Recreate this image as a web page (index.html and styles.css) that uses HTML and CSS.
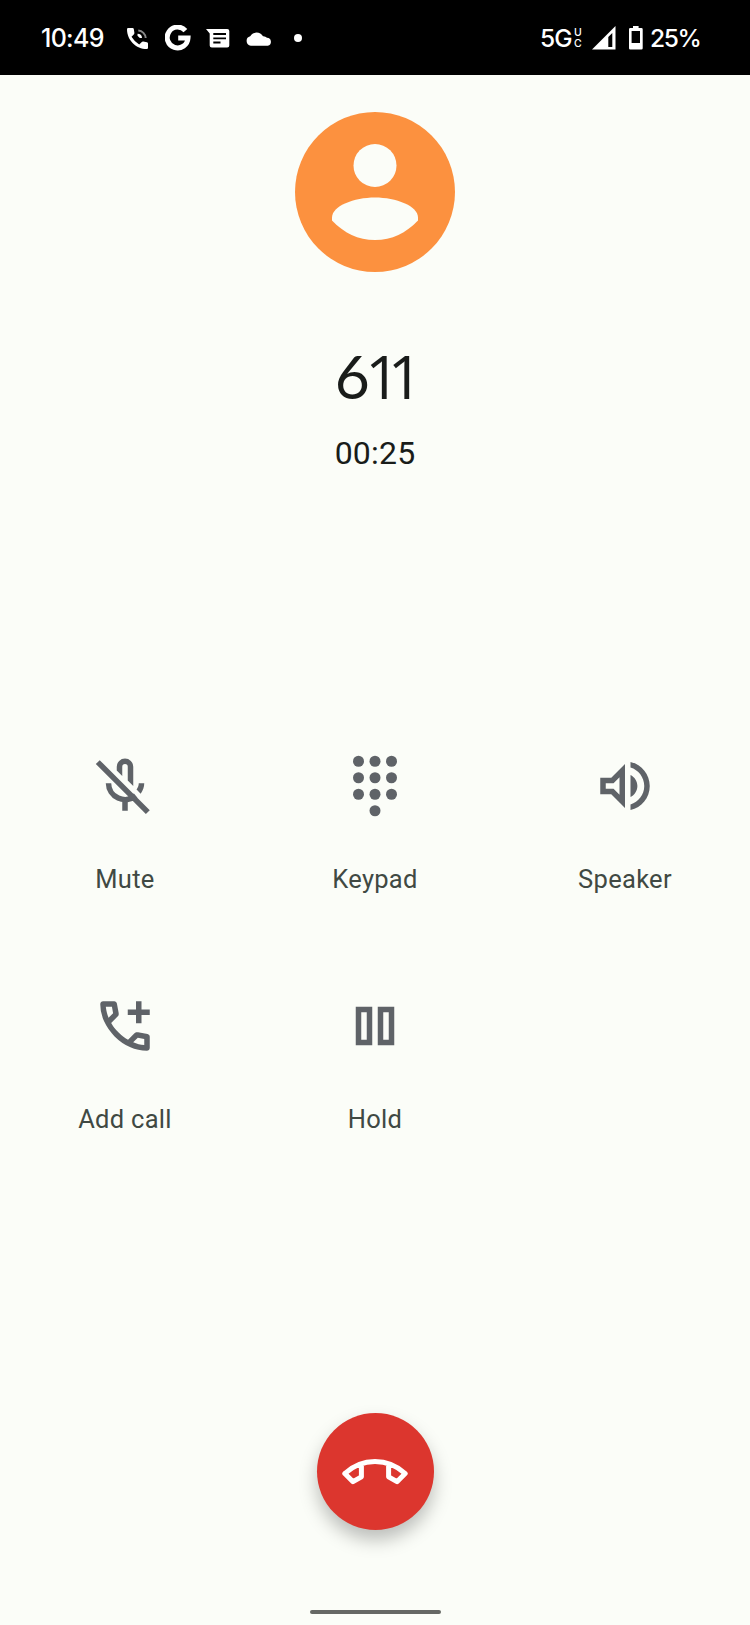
FILE: index.html
```
<!DOCTYPE html>
<html lang="en">

<head>
  <meta charset="UTF-8">
  <title>Call</title>
  <link rel="stylesheet" href="styles.css">
</head>

<body>
  <div class="status">
    <span class="time">10:49</span>
    <svg class="s-phone" width="21" height="21" viewBox="0 0 21 21">
      <path fill="#fff" d="M1.2 0H5.6Q6.6 0 6.8 1L7.4 4.8Q7.5 5.6 7 6.2L4.5 8.8Q7.4 13.7 12.2 16.4L14.8 13.9Q15.4 13.3 16.2 13.5L20 14.2Q21 14.4 21 15.4V19.8Q21 21 19.8 21C9 21 0 12 0 1.2Q0 0 1.2 0Z" />
      <path fill="none" stroke="#888" stroke-width="2" d="M11.3 2.5A8 8 0 0 1 18.7 10" />
      <path fill="#fff" d="M10.5 5.8A4.5 4.5 0 0 1 15 10H12.8L10.5 7.8Z" />
    </svg>
    <svg class="s-google" width="26" height="26" viewBox="0 0 26 26">
      <path fill="none" stroke="#fff" stroke-width="5" d="M20.4 5.6A10.4 10.4 0 1 0 23 13.1H13.2" />
    </svg>
    <svg class="s-msg" width="24" height="19" viewBox="0 0 24 19">
      <path fill="#fff" d="M0 0H21.2Q23.3 0 23.3 2V16.5Q23.3 18.6 21.2 18.6H5.8Q3.7 18.6 3.7 16.5V4.6Z" />
      <path stroke="#000" stroke-width="1.8" d="M7.3 5H20M7.3 9.3H20M7.3 13.5H14.5" />
    </svg>
    <svg class="s-cloud" width="26" height="15" viewBox="0 0 26 15">
      <path fill="#fff" d="M4.8 14.7A4.8 4.8 0 0 1 4.2 5.3A7.4 7.4 0 0 1 17 5.3A5 5 0 0 1 21 6.8A4 4 0 0 1 21.8 14.7Z" />
    </svg>
    <span class="dot"></span>
    <span class="net">5G</span>
    <span class="uc"><i>U</i><i>C</i></span>
    <svg class="s-signal" width="24" height="24" viewBox="0 0 24 24">
      <path fill="#fff" fill-rule="evenodd" d="M0 23.5L23.5 0V23.5ZM16.3 11V21H20.3V7Z" />
    </svg>
    <svg class="s-battery" width="14" height="24" viewBox="0 0 14 24">
      <path fill="#fff" fill-rule="evenodd" d="M4 0H9.6V2H12.4Q13.7 2 13.7 3.3V22.2Q13.7 23.5 12.4 23.5H1.3Q0 23.5 0 22.2V3.3Q0 2 1.3 2H4ZM2.6 5V17H11V5Z" />
    </svg>
    <span class="percent">25%</span>
  </div>

  <div class="call">
    <svg class="avatar" width="160" height="160" viewBox="0 0 160 160">
      <circle cx="80" cy="80" r="80" fill="#fc913f" />
      <circle cx="80" cy="53.5" r="21.5" fill="#fbfdf8" />
      <path fill="#fbfdf8" d="M37 105.500C37 94 59 85.500 80 85.500S123 94 123 105.500V108.500C111 121 97 128 80 128S49 121 37 108.500Z" />
    </svg>
    <h1 class="number"><span class="six">6</span>11</h1>
    <div class="timer">00:25</div>

    <div class="actions">
      <div class="item">
        <svg class="icon" viewBox="0 0 24 24">
          <path d="M9 6.400V5A3 3 0 0 1 15 5V12L13 10V5A1 1 0 0 0 11 5V8.400ZM17 11H19C19 12.400 18.500 13.700 17.700 14.800L16.200 13.300C16.700 12.600 17 11.800 17 11ZM11 17.500H13V21H11Z" />
          <path class="line" d="M6 11A6 6 0 0 0 15.900 15.500M2.100 3.300L20.300 21.500" />
        </svg>
        <span class="label">Mute</span>
      </div>
      <div class="item">
        <svg class="icon" viewBox="0 0 24 24">
          <circle cx="6" cy="3" r="2" /><circle cx="12" cy="3" r="2" /><circle cx="18" cy="3" r="2" />
          <circle cx="6" cy="9" r="2" /><circle cx="12" cy="9" r="2" /><circle cx="18" cy="9" r="2" />
          <circle cx="6" cy="15" r="2" /><circle cx="12" cy="15" r="2" /><circle cx="18" cy="15" r="2" />
          <circle cx="12" cy="21" r="2" />
        </svg>
        <span class="label">Keypad</span>
      </div>
      <div class="item">
        <svg class="icon" viewBox="0 0 24 24">
          <path d="M3 9v6h4l5 5V4L7 9H3zm7-.17v6.34L7.830 13H5v-2h2.830L10 8.830zM16.500 12c0-1.770-1.020-3.290-2.500-4.030v8.050c1.480-.73 2.500-2.250 2.500-4.020zM14 3.230v2.060c2.890.86 5 3.540 5 6.710s-2.110 5.850-5 6.710v2.060c4.010-.91 7-4.490 7-8.770 0-4.280-2.990-7.860-7-8.770z" />
        </svg>
        <span class="label">Speaker</span>
      </div>
      <div class="item">
        <svg class="icon" viewBox="0 0 24 24">
          <path d="M19.950 21q-3.125 0-6.175-1.362-3.050-1.363-5.550-3.863-2.500-2.500-3.862-5.550Q3 7.175 3 4.050q0-.45.3-.75t.75-.3H8.100q.35 0 .625.238.275.237.325.562l.65 3.500q.05.4-.025.675-.075.275-.275.475L6.975 10.900q.5.925 1.187 1.787.688.863 1.513 1.663.775.775 1.625 1.438.85.662 1.800 1.212l2.350-2.350q.225-.225.588-.338.362-.112.712-.062l3.450.7q.35.1.575.363.225.262.225.587v4.050q0 .45-.3.75t-.75.3ZM6.025 9l1.650-1.650L7.250 5H5.025q.125 1.025.35 2.025.225 1 .65 1.975Zm8.950 8.950q.975.425 1.988.675 1.012.25 2.037.325v-2.200l-2.350-.475Z" />
          <path class="line" d="M17 3V11M13 7H21" />
        </svg>
        <span class="label">Add call</span>
      </div>
      <div class="item">
        <svg class="icon" viewBox="0 0 24 24">
          <path class="line" d="M6 6H10V18H6ZM14 6H18V18H14Z" />
        </svg>
        <span class="label">Hold</span>
      </div>
    </div>

    <div class="hangup">
      <svg width="66" height="26" viewBox="0 0 66 26">
        <path fill="none" stroke="#fff" stroke-width="5" stroke-linejoin="round" stroke-linecap="round" d="M2.800 14.500Q16 2.500 33 2.500T63.200 14.500L55 22.700L46.600 17.800V6M2.800 14.500L11 22.700L19.400 17.800V6" />
      </svg>
    </div>
    <div class="home"></div>
  </div>
</body>

</html>
```
FILE: styles.css
```
* {
  margin: 0;
  padding: 0;
  box-sizing: border-box;
}

body {
  width: 750px;
  height: 1625px;
  overflow: hidden;
  background-color: #fbfdf8;
  font-family: Roboto, "Liberation Sans", sans-serif;
  color: #191c1a;
}

svg {
  display: block;
  flex: none;
}

.status {
  display: flex;
  align-items: center;
  height: 75px;
  padding-top: 1px;
  padding-left: 41px;
  background-color: #000;
  color: #fff;
  font-family: Inter, sans-serif;
  font-size: 25px;
  font-weight: 500;
  line-height: 30px;
  white-space: nowrap;
}

.time {
  width: 86px;
  letter-spacing: -.7px;
}

.s-google {
  margin-left: 17px;
}

.s-msg {
  margin-left: 15px;
}

.s-cloud {
  margin-left: 16px;
}

.dot {
  width: 8px;
  height: 8px;
  margin-left: 22px;
  border-radius: 50%;
  background-color: #fff;
}

.net {
  width: 34px;
  margin-left: 238px;
  font-size: 24.5px;
  letter-spacing: -.8px;
}

.uc {
  display: flex;
  flex-direction: column;
  width: 9px;
  font-size: 10.5px;
  line-height: 11px;
}

.uc i {
  font-style: normal;
}

.s-signal {
  margin-left: 9px;
}

.s-battery {
  margin-left: 13px;
}

.percent {
  margin-left: 7px;
  font-size: 24.5px;
  letter-spacing: -1.4px;
}

.call {
  display: flex;
  flex-direction: column;
  align-items: center;
}

.avatar {
  margin-top: 37px;
}

.number {
  height: 60px;
  margin-top: 74px;
  padding-right: 5px;
  font-family: "Open Sans", sans-serif;
  font-size: 61px;
  font-weight: 400;
  line-height: 60px;
  letter-spacing: -12.4px;
}

.six {
  font-family: Lato, sans-serif;
  font-size: 60.5px;
  letter-spacing: -4.6px;
}

.timer {
  margin-top: 31px;
  font-size: 32px;
  line-height: 32px;
  letter-spacing: .2px;
}

.actions {
  display: grid;
  grid-template-columns: repeat(3, 250px);
  row-gap: 99px;
  margin-top: 284px;
}

.item {
  display: flex;
  flex-direction: column;
  align-items: center;
}

.icon {
  width: 66px;
  height: 66px;
  fill: #5f6368;
}

.line {
  fill: none;
  stroke: #5f6368;
  stroke-width: 2;
}

.label {
  margin-top: 45px;
  font-size: 25.5px;
  line-height: 30px;
  letter-spacing: .3px;
  color: #404943;
}

.hangup {
  display: flex;
  align-items: center;
  justify-content: center;
  width: 117px;
  height: 117px;
  margin-top: 279px;
  border-radius: 50%;
  background-color: #dc362e;
  box-shadow: 0 10px 18px rgba(0, 0, 0, .25);
}

.home {
  width: 131px;
  height: 4px;
  margin-top: 80px;
  border-radius: 2px;
  background-color: #666865;
}
```
